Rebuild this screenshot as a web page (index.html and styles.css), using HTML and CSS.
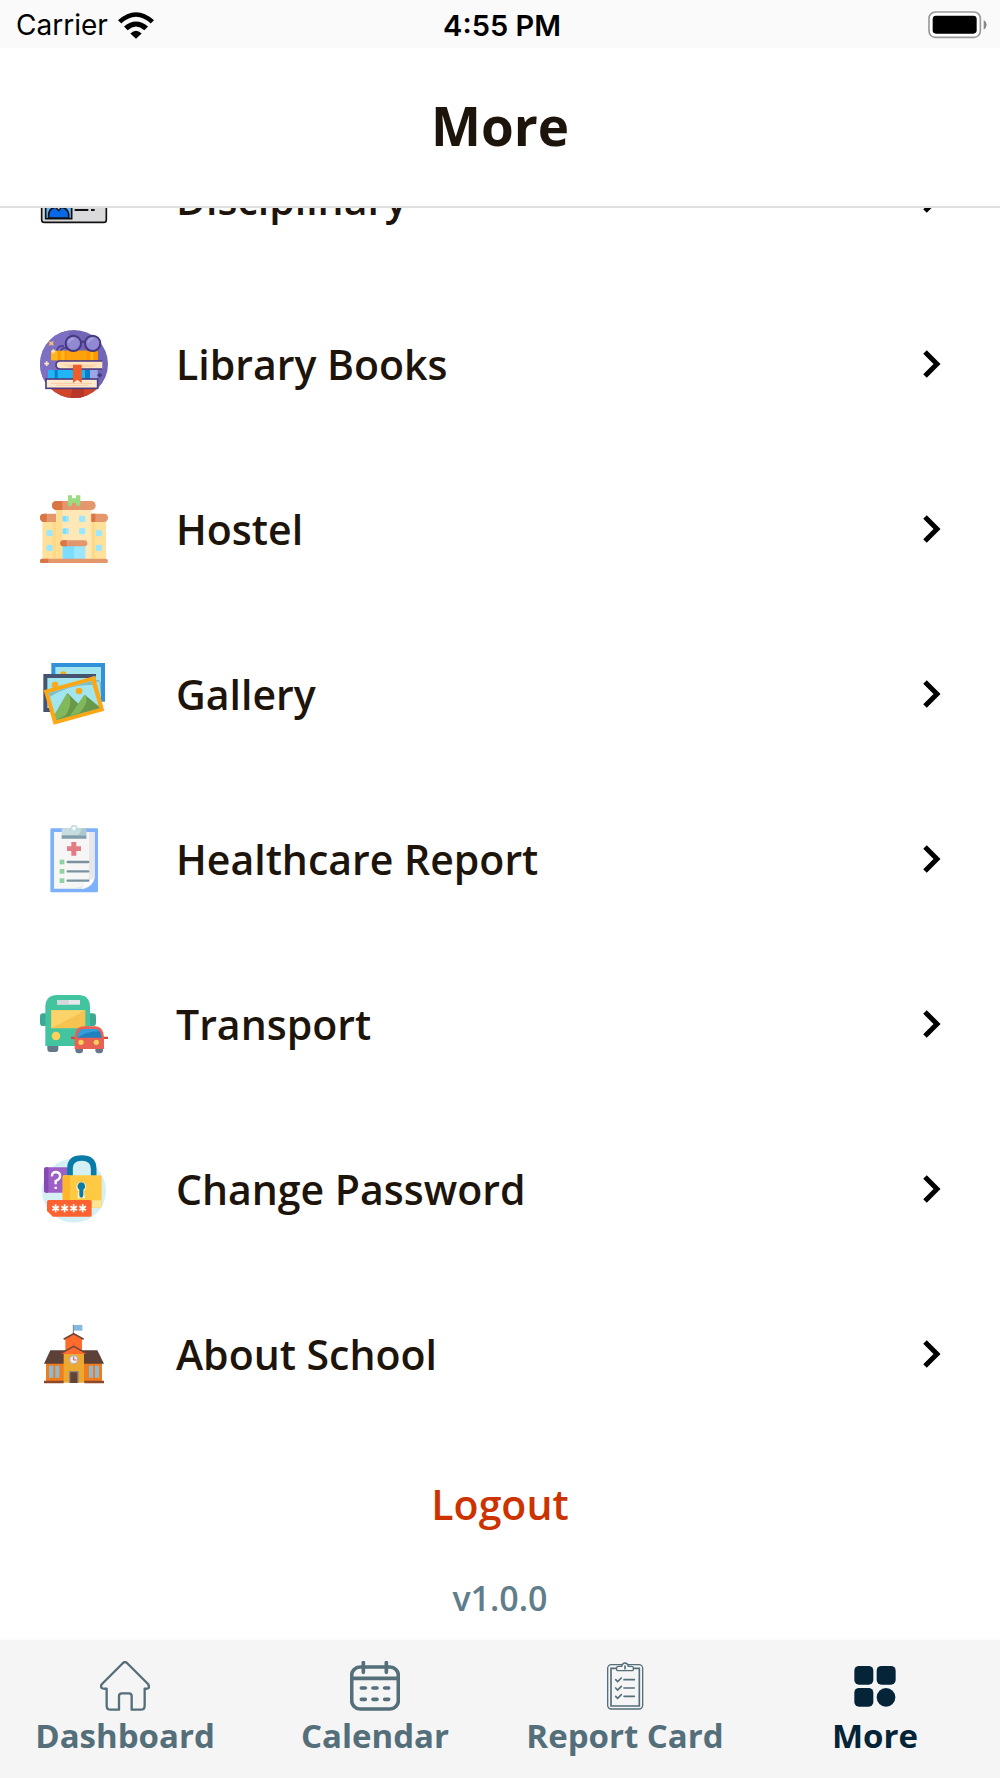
FILE: index.html
```html
<!DOCTYPE html>
<html lang="en">
<head>
    <meta charset="UTF-8">
    <meta name="viewport" content="width=device-width, initial-scale=1.0">
    <title>More</title>
    <link rel="stylesheet" href="styles.css">
</head>
<body>
    <div class="status-bar">
        <div class="carrier">
            <span>Carrier</span>
            <svg class="wifi" viewBox="0 0 108 80" aria-hidden="true">
                <path d="M0 24Q54-24 108 24L98 34Q54-6 10 34Z"/>
                <path d="M18 43Q54 13 90 43L79 54Q54 32 29 54Z"/>
                <path d="M37 64Q54 48 71 64L54 80Z"/>
            </svg>
        </div>
        <span class="time">4:55 PM</span>
        <svg class="battery" viewBox="0 0 180 84" aria-hidden="true">
            <rect x="3" y="3" width="154" height="76" rx="19" fill="#fff" stroke="#999" stroke-width="5"/>
            <rect x="14" y="14" width="132" height="54" rx="10"/>
            <path d="M167 27Q176 32 176 41T167 56Z" fill="#888"/>
        </svg>
    </div>

    <header class="header">
        <h1>More</h1>
    </header>

    <main class="scroll">
        <div class="content">
            <nav class="menu">
                <a class="item" href="#disciplinary">
                    <svg class="icon" viewBox="0 0 204 204" aria-hidden="true">
                        <rect x="5" y="30" width="194" height="142" rx="8" fill="#dadadd" stroke="#111" stroke-width="5"/>
                        <rect x="17" y="62" width="78" height="99" fill="#66b5f7" stroke="#111" stroke-width="5"/>
                        <path d="M26 159V149Q27 127 56 125Q84 127 86 149V159Z" fill="#0869e8" stroke="#111" stroke-width="5"/>
                        <path d="M47 126H65L56 137Z" fill="#f4c9a0" stroke="#111" stroke-width="4"/>
                        <circle cx="56" cy="101" r="20" fill="#f4c9a0" stroke="#111" stroke-width="5"/>
                        <path d="M104 135H145M153 135H164M104 108H176" stroke="#111" stroke-width="6"/>
                    </svg>
                    <span>Disciplinary</span>
                    <svg class="chevron" viewBox="0 0 18 28" aria-hidden="true"><path d="M2 2L14 14L2 26"/></svg>
                </a>
                <a class="item" href="#library">
                    <svg class="icon" viewBox="30 39 204 204" aria-hidden="true">
                        <clipPath id="disc"><circle cx="132" cy="141" r="102"/></clipPath>
                        <circle cx="132" cy="141" r="102" fill="#7165b6"/>
                        <g clip-path="url(#disc)">
                            <path d="M128 39A102 102 0 0 0 46 200H90L120 39Z" fill="#7d70c2"/>
                            <path d="M50 214H220V244H50Z" fill="#d14429"/>
                            <path d="M128 214H162V244H120Z" fill="#b93728"/>
                        </g>
                        <path d="M80 103Q82 84 102 87M92 103Q96 89 112 94" fill="none" stroke="#4d3e92" stroke-width="5"/>
                        <rect x="63" y="101" width="141" height="29" rx="4" fill="#ff9800"/>
                        <path d="M63 105V130H83V101H67ZM92 101H104V130H92ZM181 101H190V130H181Z" fill="#ffb51c"/>
                        <path d="M110 101H170V130H110Z" fill="#ffa20e"/>
                        <path d="M217 132H91Q78 132 78 144T91 156H217" fill="#ffe5c5" stroke="#4d3e80" stroke-width="5"/>
                        <path d="M100 144H200M112 149H190" stroke="#f8c99c" stroke-width="3"/>
                        <rect x="54" y="159" width="147" height="27" rx="3" fill="#20b5f6"/>
                        <path d="M74 159H83V186H74ZM165 159H180V186H165Z" fill="#087fc7"/>
                        <path d="M180 159H203V186H180Z" fill="#9ba8e5"/>
                        <rect x="48" y="186" width="155" height="28" fill="#ffe9cf" stroke="#4d3e80" stroke-width="5"/>
                        <path d="M63 199H186M78 205H175" stroke="#f8c99c" stroke-width="3"/>
                        <path d="M129 143H155V198L142 188L129 198Z" fill="#f25b2a"/>
                        <path d="M152 77Q158 69 164 77" fill="none" stroke="#44367f" stroke-width="5"/>
                        <circle cx="130" cy="79" r="23" fill="#9289d3" stroke="#44367f" stroke-width="6"/>
                        <circle cx="188" cy="79" r="23" fill="#9289d3" stroke="#44367f" stroke-width="6"/>
                        <path d="M116 77Q120 65 132 65M174 77Q178 65 190 65" fill="none" stroke="#aaa3e1" stroke-width="5"/>
                        <path d="M55 72L63 75L71 71L69 79L71 87L63 83L56 87L59 79Z" fill="#f7bc73"/>
                        <path d="M70 97V109M64 103H76M50 133V147M43 140H57" stroke="#ffe5bd" stroke-width="5"/>
                        <path d="M209 168V181M202 175H216" stroke="#44367f" stroke-width="5"/>
                    </svg>
                    <span>Library Books</span>
                    <svg class="chevron" viewBox="0 0 18 28" aria-hidden="true"><path d="M2 2L14 14L2 26"/></svg>
                </a>
                <a class="item" href="#hostel">
                    <svg class="icon" viewBox="30 39 204 204" aria-hidden="true">
                        <path d="M37 117H228V232H37Z" fill="#ffe19b"/>
                        <path d="M68 117H80V232H68ZM184 117H194V232H184Z" fill="#ffd885"/>
                        <path d="M79 80H184V232H79Z" fill="#ffe8b5"/>
                        <path d="M79 80H97V232H79Z" fill="#ffdd91"/>
                        <path d="M78 95H43Q30 95 30 107T43 120H78ZM184 95H221Q234 95 234 107T221 120H184Z" fill="#e4976d"/>
                        <path d="M50 95H43Q30 95 30 107T43 120H50ZM184 95H196V120H184Z" fill="#da7544"/>
                        <rect x="66" y="57" width="131" height="27" rx="13" fill="#e4976d"/>
                        <path d="M97 57H80Q66 57 66 70T80 84H97Z" fill="#da7544"/>
                        <path d="M114 40H126V49H138V40H151V71H139V63H126V71H114Z" fill="#99dc82"/>
                        <g fill="#9be7ff">
                            <rect x="98" y="101" width="19" height="19" rx="5"/><rect x="147" y="101" width="19" height="19" rx="5"/>
                            <rect x="98" y="138" width="19" height="19" rx="5"/><rect x="147" y="138" width="19" height="19" rx="5"/>
                            <rect x="49" y="144" width="19" height="19" rx="5"/><rect x="197" y="144" width="19" height="19" rx="5"/>
                            <rect x="49" y="188" width="19" height="19" rx="5"/><rect x="197" y="188" width="19" height="19" rx="5"/>
                            <path d="M98 190H166V232H98Z"/>
                        </g>
                        <path d="M98 190H132V232H98ZM98 103H108V118H98ZM98 140H108V155H98Z" fill="#7bddff"/>
                        <rect x="91" y="175" width="81" height="18" rx="9" fill="#e4976d"/>
                        <path d="M110 175H100Q91 175 91 184T100 193H110Z" fill="#da7544"/>
                        <rect x="30" y="230" width="204" height="14" rx="7" fill="#e4976d"/>
                        <path d="M55 230H37Q30 230 30 237T37 244H55Z" fill="#da7544"/>
                    </svg>
                    <span>Hostel</span>
                    <svg class="chevron" viewBox="0 0 18 28" aria-hidden="true"><path d="M2 2L14 14L2 26"/></svg>
                </a>
                <a class="item" href="#gallery">
                    <svg class="icon" viewBox="30 27 204 204" aria-hidden="true">
                        <path d="M64 36H225V152H64Z" fill="#3291d9"/>
                        <path d="M76 48H213V140H76Z" fill="#a3e5ee"/>
                        <circle cx="100" cy="70" r="9" fill="#fba819"/>
                        <path d="M40 69H198V183H40Z" fill="#455270"/>
                        <path d="M52 81H186V171H52Z" fill="#a3e5ee"/>
                        <circle cx="75" cy="102" r="10" fill="#fba819"/>
                        <path d="M54 113L188 81V76H198V92H213V140L208 86Z" fill="#82bac0"/>
                        <path d="M41 118L194 75L223 179L71 221Z" fill="#fda714"/>
                        <path d="M56 126L184 90L208 171L80 207Z" fill="#a3e5ee"/>
                        <path d="M184 90L56 126L60 137Q120 99 188 102Z" fill="#81bdc4"/>
                        <circle cx="147" cy="120" r="10" fill="#fba819"/>
                        <path d="M75 190L112 126L145 158L164 131L208 167V172L80 207Z" fill="#68984a"/>
                        <path d="M75 190L112 126Q132 151 107 193L80 206ZM145 158L164 131Q181 151 148 186L120 194Z" fill="#82b85c"/>
                    </svg>
                    <span>Gallery</span>
                    <svg class="chevron" viewBox="0 0 18 28" aria-hidden="true"><path d="M2 2L14 14L2 26"/></svg>
                </a>
                <a class="item" href="#healthcare">
                    <svg class="icon" viewBox="30 29 204 204" aria-hidden="true">
                        <rect x="61" y="39" width="143" height="192" rx="4" fill="#7eb1fc"/>
                        <path d="M72 50H194V188Q188 214 162 220H72Z" fill="#f7f6f7"/>
                        <path d="M177 50H194V188Q188 212 162 220L135 218Q177 211 177 178Z" fill="#e8e6ed"/>
                        <path d="M154 220Q164 211 163 197Q181 197 192 188Q187 214 154 220Z" fill="#fff"/>
                        <circle cx="132" cy="39" r="8" fill="#fff" stroke="#c9dfe3" stroke-width="6"/>
                        <path d="M95 70V46Q95 38 103 38H119Q121 48 132 48T145 38H161Q169 38 169 46V70Z" fill="#c6dce1"/>
                        <path d="M95 60H169V70H95Z" fill="#829da9"/>
                        <path d="M153 39H161Q169 38 169 46V60H141Q153 55 153 39Z" fill="#adc7ce"/>
                        <path d="M124 80H139V93H153V107H139V121H124V107H111V93H124Z" fill="#e27d85"/>
                        <g fill="#8dd39b">
                            <rect x="89" y="133" width="14" height="14"/><rect x="89" y="161" width="14" height="14"/><rect x="89" y="189" width="14" height="14"/>
                        </g>
                        <path d="M113 140H175M113 168H175M113 196H175" stroke="#7b929e" stroke-width="7" stroke-linecap="round"/>
                    </svg>
                    <span>Healthcare Report</span>
                    <svg class="chevron" viewBox="0 0 18 28" aria-hidden="true"><path d="M2 2L14 14L2 26"/></svg>
                </a>
                <a class="item" href="#transport">
                    <svg class="icon" viewBox="30 27 204 204" aria-hidden="true">
                        <path d="M52 190H85V204Q85 213 76 213H61Q52 213 52 204Z" fill="#65788b"/>
                        <path d="M48 97H39Q30 97 30 107V125Q30 135 39 135H48ZM179 97H188Q198 97 198 107V125Q198 135 188 135H179Z" fill="#3da994"/>
                        <path d="M46 195V76Q48 42 82 42H145Q178 42 180 76V195Z" fill="#43c4a0"/>
                        <path d="M82 57H150V71H82Z" fill="#e7e8eb"/><path d="M82 57H116V71H82Z" fill="#d3d6da"/>
                        <path d="M64 88H166V142H64Z" fill="#f6c350"/><path d="M64 88H166L64 142Z" fill="#fbd368"/>
                        <circle cx="78" cy="165" r="13" fill="#fbd15c"/>
                        <path d="M136 199H159V207Q159 217 150 217H145Q136 217 136 207ZM196 199H219V207Q219 217 210 217H205Q196 217 196 207Z" fill="#65788b"/>
                        <path d="M123 167H135V174H123ZM221 167H234V174H221Z" fill="#d74438"/>
                        <path d="M134 204V167Q136 136 161 136H196Q219 136 222 167V204Z" fill="#e96152"/>
                        <path d="M142 170Q144 144 162 144H197Q211 144 215 170Z" fill="#2180bf"/>
                        <path d="M142 170Q144 144 162 144H197Q204 144 208 151Q174 150 142 170Z" fill="#369ddb"/>
                        <circle cx="153" cy="184" r="8" fill="#fbd15c"/><circle cx="199" cy="184" r="8" fill="#fbd15c"/>
                    </svg>
                    <span>Transport</span>
                    <svg class="chevron" viewBox="0 0 18 28" aria-hidden="true"><path d="M2 2L14 14L2 26"/></svg>
                </a>
                <a class="item" href="#password">
                    <svg class="icon" viewBox="30 28 204 204" aria-hidden="true">
                        <circle cx="132" cy="135" r="96" fill="#d5f0f5"/>
                        <rect x="42" y="65" width="74" height="76" rx="7" fill="#9c5fc5"/>
                        <path d="M55 65V141H47Q42 141 42 134V72Q42 65 49 65Z" fill="#8749b5"/>
                        <path d="M66 92Q65 79 79 79Q92 81 90 94Q88 102 77 106V116M77 123V130" fill="none" stroke="#fff" stroke-width="7"/>
                        <path d="M120 91V68Q120 37 155 37T191 68V91" fill="none" stroke="#087ba6" stroke-width="17"/>
                        <rect x="98" y="89" width="117" height="97" rx="5" fill="#ffc943"/>
                        <path d="M98 93Q98 89 103 89H120V186H98Z" fill="#ffb62d"/>
                        <path d="M184 164H214V186H184Z" fill="#ffe494"/>
                        <path d="M154 109A15 15 0 0 0 145 136L142 158H165L162 136A15 15 0 0 0 154 109Z" fill="#fff0c6"/>
                        <path d="M154 110A12 12 0 0 0 148 132V148Q148 156 154 156T160 148V132A12 12 0 0 0 154 110Z" fill="#087ba6"/>
                        <path d="M56 163H180Q185 163 185 168V208Q185 213 180 213H69L51 196V168Q51 163 56 163Z" fill="#ff6231"/>
                        <g stroke="#fff" stroke-width="5">
                            <path d="M77 176V200M67 182L87 194M67 194L87 182"/>
                            <path d="M104 176V200M94 182L114 194M94 194L114 182"/>
                            <path d="M131 176V200M121 182L141 194M121 194L141 182"/>
                            <path d="M158 176V200M148 182L168 194M148 194L168 182"/>
                        </g>
                    </svg>
                    <span>Change Password</span>
                    <svg class="chevron" viewBox="0 0 18 28" aria-hidden="true"><path d="M2 2L14 14L2 26"/></svg>
                </a>
                <a class="item" href="#about">
                    <svg class="icon" viewBox="30 19 204 204" aria-hidden="true">
                        <path d="M130 33V62" stroke="#777" stroke-width="3"/><path d="M132 34H157V51H132Z" fill="#83b8e3"/>
                        <path d="M48 145H216V205H48Z" fill="#ef7d1d"/>
                        <path d="M61 110H202L222 150H42Z" fill="#5d4038"/>
                        <path d="M106 76L131 60L156 76V112H106Z" fill="#ff6b2c"/>
                        <path d="M101 77L131 60L161 77" fill="none" stroke="#704536" stroke-width="5"/>
                        <path d="M101 122L131 100L162 122V207H101Z" fill="#eda92f"/>
                        <path d="M90 121L131 97L172 121Z" fill="#ff6b2c"/>
                        <path d="M92 120L131 98L170 120" fill="none" stroke="#704536" stroke-width="4"/>
                        <circle cx="131" cy="138" r="12" fill="#eee" stroke="#b3b4b0" stroke-width="4"/>
                        <path d="M131 129V139H139" fill="none" stroke="#e44c4c" stroke-width="3"/>
                        <path d="M57 156H70V192H57ZM76 156H88V192H76ZM177 156H189V192H177ZM195 156H207V192H195Z" fill="#8bb9d6"/>
                        <path d="M42 201H101V209H42ZM163 201H222V209H163Z" fill="#8d4829"/>
                        <path d="M119 208V174H144V208" fill="#634338" stroke="#8d8580" stroke-width="4"/>
                    </svg>
                    <span>About School</span>
                    <svg class="chevron" viewBox="0 0 18 28" aria-hidden="true"><path d="M2 2L14 14L2 26"/></svg>
                </a>
            </nav>
            <button type="button" class="logout">Logout</button>
            <p class="version">v1.0.0</p>
        </div>
    </main>

    <nav class="tab-bar">
        <a class="tab" href="#dashboard">
            <svg class="tab-icon" viewBox="0 0 150 150" fill="none" stroke="currentColor" stroke-width="7" aria-hidden="true">
                <path d="M69 6Q75 1 81 6L144 69Q148 75 146 81Q143 84 134 83V134Q134 146 122 146H95V105Q95 97 87 97H65Q57 97 57 105V146H32Q20 146 20 134V83Q8 84 5 81Q1 75 6 69Z" stroke-linejoin="round"/>
            </svg>
            Dashboard
        </a>
        <a class="tab" href="#calendar">
            <svg class="tab-icon" viewBox="0 0 150 150" fill="none" stroke="currentColor" stroke-width="11" stroke-linecap="round" aria-hidden="true">
                <rect x="5" y="18" width="140" height="126" rx="25"/>
                <path d="M6 52H144M40 5V34M109 5V34M34 81H46M69 81H81M104 81H116M34 115H46M69 115H81M104 115H116"/>
            </svg>
            Calendar
        </a>
        <a class="tab" href="#report">
            <svg class="tab-icon" viewBox="0 0 150 150" fill="none" stroke="currentColor" stroke-width="4" aria-hidden="true">
                <rect x="23" y="11" width="105" height="133" rx="11"/>
                <path d="M50 22H33V135H118V22H101" stroke-width="5"/>
                <path d="M50 20Q50 16 56 16H65Q67 6 75 6T85 16H94Q100 16 100 20V26Q100 29 96 29H54Q50 29 50 26Z" fill="#f5f5f5"/>
                <path d="M75 15V23M72 56H103M72 81H103M72 106H103M47 56L53 62L64 51M47 81L53 87L64 76M47 106L53 112L64 101" stroke-width="5" stroke-linecap="round"/>
            </svg>
            Report Card
        </a>
        <a class="tab active" href="#more" aria-current="page">
            <svg class="tab-icon" viewBox="0 0 150 150" fill="currentColor" aria-hidden="true">
                <rect x="13" y="15" width="57" height="56" rx="14"/>
                <rect x="80" y="15" width="57" height="56" rx="14"/>
                <rect x="13" y="81" width="57" height="56" rx="14"/>
                <circle cx="108" cy="109" r="28"/>
            </svg>
            More
        </a>
    </nav>
</body>
</html>
```

FILE: styles.css
```css
* {
    box-sizing: border-box;
}
body {
    margin: 0;
    height: 100vh;
    display: flex;
    flex-direction: column;
    background-color: #fff;
    color: #1d140b;
    font-family: 'Open Sans', 'Noto Sans', sans-serif;
}
.status-bar {
    display: grid;
    grid-template-columns: 1fr auto 1fr;
    align-items: center;
    height: 48px;
    padding: 2px 12px 0 16px;
    background-color: #fafafa;
    color: #000;
    font-family: 'Inter', sans-serif;
    font-size: 29px;
}
.carrier {
    display: flex;
    align-items: center;
    gap: 10px;
    font-size: 28px;
}
.wifi {
    width: 36px;
    height: 27px;
}
.time {
    font-weight: 600;
}
.battery {
    width: 60px;
    height: 28px;
    justify-self: end;
}
.header {
    display: flex;
    justify-content: center;
    align-items: center;
    height: 160px;
    padding-bottom: 4px;
    border-bottom: 2px solid #e0e0e0;
}
h1 {
    margin: 0;
    font-size: 53px;
    font-weight: 700;
}
/* reversed column keeps the list scrolled to its end */
.scroll {
    flex: 1;
    min-height: 0;
    display: flex;
    flex-direction: column-reverse;
    overflow-y: auto;
    scrollbar-width: none;
}
.content {
    display: flex;
    flex-direction: column;
    align-items: center;
}
.menu {
    width: 100%;
}
.item {
    display: flex;
    align-items: center;
    gap: 68px;
    height: 165px;
    padding: 0 59px 0 40px;
    color: inherit;
    font-size: 41px;
    font-weight: 600;
    text-decoration: none;
}
.item span {
    flex: 1;
}
.icon {
    width: 68px;
    height: 68px;
}
.chevron {
    width: 18px;
    height: 28px;
    fill: none;
    stroke: #000;
    stroke-width: 5px;
}
.logout {
    height: 80px;
    margin-top: 28px;
    padding: 0 20px;
    border: none;
    background: none;
    color: #cc3300;
    font: inherit;
    font-size: 41px;
    font-weight: 600;
}
.version {
    margin: 30px 0 18px;
    color: #607d8b;
    font-size: 34px;
    font-weight: 600;
    line-height: 48px;
}
.tab-bar {
    display: grid;
    grid-template-columns: repeat(4, 1fr);
    height: 138px;
    padding-top: 21px;
    background-color: #f5f5f5;
    box-shadow: 0 0 4px #f5f5f5;
}
.tab {
    display: flex;
    flex-direction: column;
    align-items: center;
    gap: 3px;
    color: #546e7a;
    font-size: 33px;
    font-weight: 700;
    line-height: 44px;
    text-decoration: none;
}
.tab-icon {
    width: 50px;
    height: 50px;
}
.active {
    color: #062437;
}
```
